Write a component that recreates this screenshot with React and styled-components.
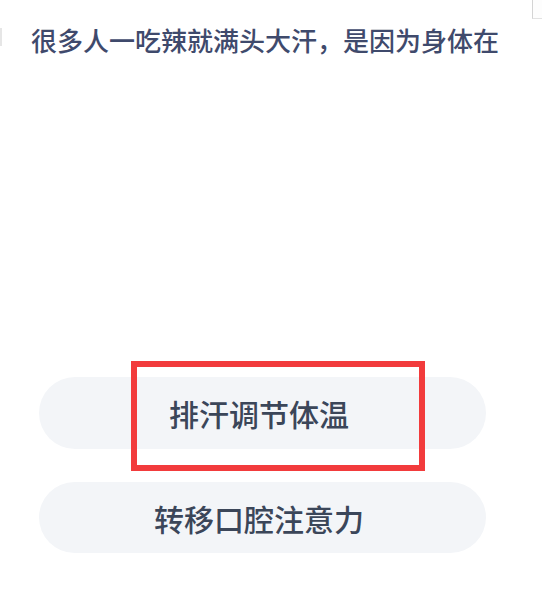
import React from "react";
import styled, { createGlobalStyle } from "styled-components";

const Global = createGlobalStyle`
  html, body { margin: 0; padding: 0; background: #ffffff; }
  body { font-family: "Noto Sans CJK SC", "Noto Sans", sans-serif; }
`;

const Page = styled.div`
  position: relative;
  width: 542px;
  height: 593px;
  overflow: hidden;
  display: flex;
  flex-direction: column;
  background: #ffffff;
`;

const CornerMark = styled.div`
  position: absolute;
  top: -2px;
  left: 532px;
  width: 20px;
  height: 20px;
  border-left: 1px solid #d4d4d4;
  border-bottom: 1px solid #e2e2e2;
  background: #fdfdfd;
`;

const EdgeMark = styled.div`
  position: absolute;
  top: 28px;
  left: 0;
  width: 2px;
  height: 18px;
  background: #e6e6e6;
`;

const Question = styled.h1`
  margin: 0;
  padding: 22px 0 0 31px;
  font-size: 26px;
  line-height: 36px;
  font-weight: 500;
  color: #3f4a6c;
  white-space: nowrap;
`;

const Options = styled.div`
  display: flex;
  flex-direction: column;
  gap: 33px;
  padding: 319px 0 0 39px;
  width: 447px;
`;

const OptionWrap = styled.div`
  position: relative;
`;

const Option = styled.div`
  height: ${(p) => p.$h}px;
  border-radius: 36px;
  background: #f3f5f8;
  display: flex;
  align-items: center;
  justify-content: center;
  font-size: 30px;
  font-weight: 500;
  color: #3b4659;
  padding-right: 7px;
`;

const Highlight = styled.div`
  position: absolute;
  left: 92px;
  top: -16px;
  width: 294px;
  height: 110px;
  box-sizing: border-box;
  border: 6px solid #f23b3c;
  pointer-events: none;
`;

export default function App() {
  return (
    <>
      <Global />
      <Page>
        <CornerMark />
        <EdgeMark />
        <Question>很多人一吃辣就满头大汗，是因为身体在</Question>
        <Options>
          <OptionWrap>
            <Option $h={72}>排汗调节体温</Option>
            <Highlight />
          </OptionWrap>
          <OptionWrap>
            <Option $h={71}>转移口腔注意力</Option>
          </OptionWrap>
        </Options>
      </Page>
    </>
  );
}
